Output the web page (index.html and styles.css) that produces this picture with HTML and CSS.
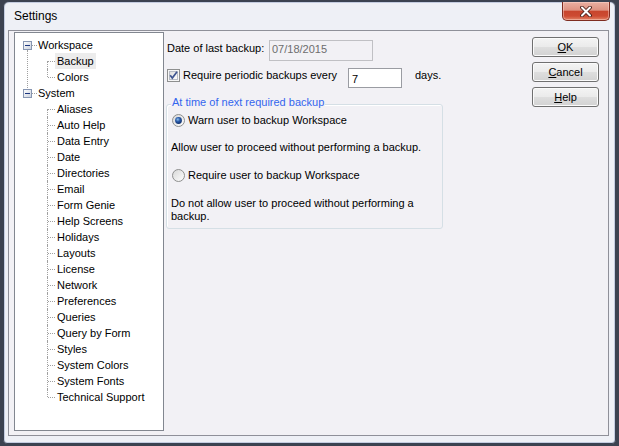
FILE: index.html
```html
<!DOCTYPE html>
<html>
<head>
<meta charset="utf-8">
<title>Settings</title>
<link rel="stylesheet" href="styles.css">
</head>
<body>
<div class="window">
  <div class="titlebar">
    <span class="title">Settings</span>
    <div class="close">
      <svg width="12" height="11" viewBox="0 0 12 11"><path d="M2 1.5 L10 9.5 M10 1.5 L2 9.5" stroke="#4a1f18" stroke-width="3.8" stroke-linecap="round"/><path d="M2 1.5 L10 9.5 M10 1.5 L2 9.5" stroke="#ffffff" stroke-width="2" stroke-linecap="round"/></svg>
    </div>
  </div>
  <div class="client">
    <div class="tree">
      <div class="node first">
        <div class="row root-row">
          <svg class="exp" width="9" height="9" viewBox="0 0 9 9"><defs><linearGradient id="eg1" x1="0" y1="0" x2="1" y2="1"><stop offset="0" stop-color="#ffffff"/><stop offset="1" stop-color="#c9d0dc"/></linearGradient></defs><rect x=".5" y=".5" width="8" height="8" fill="url(#eg1)" stroke="#8796b2"/><rect x="2" y="4" width="5" height="1" fill="#1d3780"/></svg>
          <span class="stub"></span><span class="label">Workspace</span>
        </div>
        <div class="row child first"><span class="label sel">Backup</span></div>
        <div class="row child last"><span class="label">Colors</span></div>
      </div>
      <div class="node">
        <div class="row root-row">
          <svg class="exp" width="9" height="9" viewBox="0 0 9 9"><defs><linearGradient id="eg2" x1="0" y1="0" x2="1" y2="1"><stop offset="0" stop-color="#ffffff"/><stop offset="1" stop-color="#c9d0dc"/></linearGradient></defs><rect x=".5" y=".5" width="8" height="8" fill="url(#eg2)" stroke="#8796b2"/><rect x="2" y="4" width="5" height="1" fill="#1d3780"/></svg>
          <span class="stub"></span><span class="label">System</span>
        </div>
        <div class="row child first"><span class="label">Aliases</span></div>
        <div class="row child"><span class="label">Auto Help</span></div>
        <div class="row child"><span class="label">Data Entry</span></div>
        <div class="row child"><span class="label">Date</span></div>
        <div class="row child"><span class="label">Directories</span></div>
        <div class="row child"><span class="label">Email</span></div>
        <div class="row child"><span class="label">Form Genie</span></div>
        <div class="row child"><span class="label">Help Screens</span></div>
        <div class="row child"><span class="label">Holidays</span></div>
        <div class="row child"><span class="label">Layouts</span></div>
        <div class="row child"><span class="label">License</span></div>
        <div class="row child"><span class="label">Network</span></div>
        <div class="row child"><span class="label">Preferences</span></div>
        <div class="row child"><span class="label">Queries</span></div>
        <div class="row child"><span class="label">Query by Form</span></div>
        <div class="row child"><span class="label">Styles</span></div>
        <div class="row child"><span class="label">System Colors</span></div>
        <div class="row child"><span class="label">System Fonts</span></div>
        <div class="row child last"><span class="label">Technical Support</span></div>
      </div>
    </div>

    <div class="pane">
      <div class="field-row">
        <span class="field-label">Date of last backup:</span>
        <span class="textbox date">07/18/2015</span>
      </div>
      <div class="check-row">
        <svg class="check" width="13" height="13" viewBox="0 0 13 13"><defs><linearGradient id="cg" x1="0" y1="0" x2="1" y2="1"><stop offset="0" stop-color="#dcdcdc"/><stop offset="1" stop-color="#ffffff"/></linearGradient></defs><rect x=".5" y=".5" width="12" height="12" fill="#f6f6f6" stroke="#8e8f8f"/><rect x="2.5" y="2.5" width="8" height="8" fill="url(#cg)" stroke="#b8bcc6"/><path d="M3.2 6.3 L5.3 9 L10 2.8" fill="none" stroke="#3e5490" stroke-width="1.7"/></svg>
        <span class="check-label">Require periodic backups every</span>
        <span class="textbox num">7</span>
        <span class="days">days.</span>
      </div>
      <div class="group">
        <div class="group-title">At time of next required backup</div>
        <div class="radio-row">
          <svg class="radio" width="13" height="13" viewBox="0 0 13 13"><defs><linearGradient id="rg1" x1="0" y1="0" x2="1" y2="1"><stop offset="0" stop-color="#d6d6d6"/><stop offset="1" stop-color="#ffffff"/></linearGradient><radialGradient id="rd1" cx="0.4" cy="0.35" r="0.7"><stop offset="0" stop-color="#8fc3f0"/><stop offset="0.45" stop-color="#2a5aa8"/><stop offset="1" stop-color="#0f2c66"/></radialGradient></defs><circle cx="6.5" cy="6.5" r="6" fill="url(#rg1)" stroke="#8e8f8f"/><circle cx="6.5" cy="6.5" r="3.4" fill="url(#rd1)"/></svg>
          <span class="radio-label">Warn user to backup Workspace</span>
        </div>
        <p class="note n1">Allow user to proceed without performing a backup.</p>
        <div class="radio-row r2">
          <svg class="radio" width="13" height="13" viewBox="0 0 13 13"><defs><linearGradient id="rg2" x1="0" y1="0" x2="1" y2="1"><stop offset="0" stop-color="#d6d6d6"/><stop offset="1" stop-color="#ffffff"/></linearGradient></defs><circle cx="6.5" cy="6.5" r="6" fill="url(#rg2)" stroke="#8e8f8f"/></svg>
          <span class="radio-label">Require user to backup Workspace</span>
        </div>
        <p class="note n2">Do not allow user to proceed without performing a<br>backup.</p>
      </div>
    </div>

    <div class="buttons">
      <div class="btn"><span><u>O</u>K</span></div>
      <div class="btn"><span><u>C</u>ancel</span></div>
      <div class="btn"><span><u>H</u>elp</span></div>
    </div>
  </div>
</div>
</body>
</html>
```

FILE: styles.css
```css
* { box-sizing: border-box; }
html, body { margin: 0; padding: 0; }
body {
  width: 619px;
  height: 446px;
  overflow: hidden;
  background: #3c4250;
  font-family: "Liberation Sans", Arial, sans-serif;
  font-size: 11px;
  color: #000;
}

.window {
  margin: 1px 0 0 3px;
  width: 613px;
  height: 443px;
  border: 1px solid #3a4252;
  border-radius: 6px 6px 4px 4px;
  background: #eef0f6;
  box-shadow: inset 0 0 0 1px #c4cce0;
  padding: 0 6px 7px 4px;
  display: flex;
  flex-direction: column;
}

.titlebar {
  height: 28px;
  display: flex;
  align-items: flex-start;
  padding-left: 6px;
}
.title {
  font-size: 12px;
  line-height: 15px;
  padding-top: 7px;
  color: #000;
}
.close {
  margin-left: auto;
  margin-right: -1px;
  width: 48px;
  height: 19px;
  border: 1px solid #7e2c20;
  border-top: none;
  border-radius: 0 0 5px 5px;
  background: linear-gradient(#eab0a2 0%, #de9281 45%, #c8452d 52%, #cd4b32 78%, #e28366 100%);
  box-shadow: inset 0 0 0 1px rgba(255, 220, 210, 0.45);
  display: flex;
  align-items: center;
  justify-content: center;
}
.close svg { display: block; }

.client {
  height: 406px;
  border: 1px solid #8f9099;
  background: #f2f1f5;
  display: flex;
  padding: 1px 0 4px 5px;
}

/* tree */
.tree {
  width: 150px;
  border: 1px solid #828790;
  background: #fff;
  padding-top: 4px;
}
.node { position: relative; }
.node.first::before {
  content: "";
  position: absolute;
  left: 12px;
  top: 13px;
  bottom: -3px;
  border-left: 1px dotted #a0a0a0;
}
.row {
  height: 16px;
  display: flex;
  align-items: center;
  position: relative;
  white-space: nowrap;
  line-height: 13px;
}
.root-row { padding-left: 8px; }
.exp { display: block; flex: none; }
.stub {
  width: 5px;
  height: 0;
  border-top: 1px dotted #a0a0a0;
}
.label { padding: 0 1px; }
.child { padding-left: 40px; }
.child .label { padding: 0 2px; line-height: 16px; }
.label.sel { background: #ececec; }
.child::before {
  content: "";
  position: absolute;
  left: 32px;
  top: 0;
  bottom: 0;
  border-left: 1px dotted #a0a0a0;
}
.child.first::before { top: 8px; }
.child.last::before { bottom: 8px; }
.child::after {
  content: "";
  position: absolute;
  left: 33px;
  width: 7px;
  top: 8px;
  border-top: 1px dotted #a0a0a0;
}

/* pane */
.pane {
  margin-left: 3px;
  flex: 1;
}
.field-row {
  display: flex;
  align-items: flex-start;
  height: 21px;
  margin-top: 8px;
}
.field-label {
  width: 102px;
  line-height: 13px;
  padding-top: 2px;
}
.textbox {
  border: 1px solid #abadb3;
  line-height: 13px;
}
.date {
  width: 104px;
  height: 21px;
  padding: 2px 0 0 2px;
  color: #6d6d6d;
  background: #f2f1f5;
  border-color: #c0c0c4;
}
.check-row {
  display: flex;
  align-items: flex-start;
  height: 20px;
  margin-top: 7px;
}
.check { display: block; margin-top: 1px; flex: none; }
.check-label {
  width: 165px;
  margin-left: 3px;
  line-height: 13px;
  padding-top: 1px;
}
.num {
  width: 54px;
  height: 20px;
  padding: 4px 0 0 3px;
  background: #fff;
  border-color: #9a9ca2;
}
.days {
  margin-left: 13px;
  line-height: 13px;
  padding-top: 1px;
}

.group {
  margin: 16px 0 0 -1px;
  width: 277px;
  border: 1px solid #d5dfe5;
  border-radius: 3px;
  box-shadow: inset 1px 1px 0 #fff;
  padding: 0 0 5px 4px;
}
.group-title {
  width: max-content;
  margin-top: -9px;
  padding: 0 1px;
  line-height: 13px;
  color: #3366ee;
  background: #f2f1f5;
}
.radio-row {
  display: flex;
  align-items: flex-start;
  margin-top: 5px;
  line-height: 13px;
}
.radio-row.r2 { margin-top: 15px; }
.radio { display: block; flex: none; margin-left: 1px; }
.radio-label { margin-left: 3px; }
.note {
  margin: 0;
  line-height: 13px;
}
.note.n1 { margin-top: 14px; }
.note.n2 { margin-top: 15px; }

/* buttons */
.buttons {
  margin: 5px 9px 0 0;
  display: flex;
  flex-direction: column;
  gap: 5px;
}
.btn {
  width: 67px;
  height: 20px;
  border: 1px solid #707070;
  border-radius: 3px;
  background: linear-gradient(#f4f4f4 0%, #ebebeb 48%, #dedede 52%, #d2d2d2 100%);
  box-shadow: inset 0 0 0 1px #fbfbfb;
  display: flex;
  align-items: center;
  justify-content: center;
  line-height: 13px;
}
.btn u { text-underline-offset: 1px; }
```
